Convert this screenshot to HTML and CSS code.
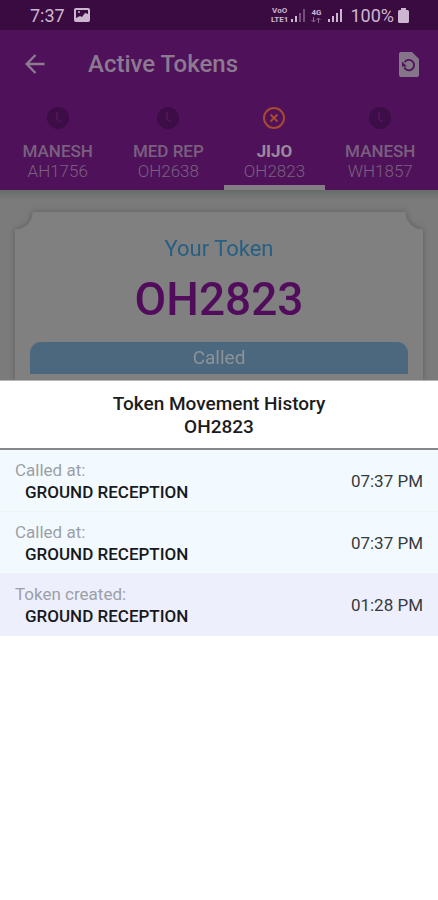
FILE: index.html
```html
<!DOCTYPE html>
<html lang="en">
<head>
<meta charset="utf-8">
<meta name="viewport" content="width=device-width, initial-scale=1">
<title>Active Tokens</title>
<link rel="stylesheet" href="styles.css">
</head>
<body>
<main class="screen">
  <div class="status">
    <span class="clock">7:37</span>
    <svg class="photo" width="16" height="14" viewBox="0 0 16 14" aria-hidden="true"><rect width="16" height="14" rx="2" fill="#cdb7d0"/><path d="M2 2h12v4l-3-1-3 4-2-1-4 2z" fill="#3a0b40"/><circle cx="5" cy="4" r="1" fill="#cdb7d0"/></svg>
    <span class="carrier"><span>VoO</span><span>LTE1</span></span>
    <svg class="bars" width="14" height="13" viewBox="0 0 14 13" aria-hidden="true"><path d="M0 10h2v3H0zM4 7h2v6H4z" fill="#cdb7d0"/><path d="M8 4h2v9H8zM12 0h2v13h-2z" fill="#71507a"/></svg>
    <span class="network"><span>4G</span><svg width="10" height="6" viewBox="0 0 10 6" fill="none" stroke="#8c6c92" aria-hidden="true"><path d="M2.500 0v5M.5 3l2 2 2-2M7.500 6V1M5.500 3l2-2 2 2"/></svg></span>
    <svg class="bars" width="14" height="13" viewBox="0 0 14 13" fill="#cdb7d0" aria-hidden="true"><path d="M0 10h2v3H0zM4 7h2v6H4zM8 4h2v9H8zM12 0h2v13h-2z"/></svg>
    <span class="percent">100%</span>
    <svg class="battery" width="11" height="15" viewBox="0 0 11 15" fill="#cdb7d0" aria-hidden="true"><path d="M3 0h5v2h1.500Q11 2 11 3.500v10Q11 15 9.500 15h-8Q0 15 0 13.500v-10Q0 2 1.500 2H3z"/></svg>
  </div>
  <header class="bar">
    <button class="icon-button" type="button" aria-label="Back"><svg width="20" height="20" viewBox="0 0 20 20" fill="none" stroke="#8c7a90" stroke-width="2.400" aria-hidden="true"><path d="M19.500 10H2M10.500 1L1.700 10l8.800 9"/></svg></button>
    <h1>Active Tokens</h1>
    <button class="icon-button" type="button" aria-label="Token history"><svg width="20" height="25" viewBox="0 0 20 25" aria-hidden="true"><path d="M2 0h11l7 7v16q0 2-2 2H2q-2 0-2-2V2Q0 0 2 0z" fill="#857589"/><path d="M5.600 10.200A5.200 5.200 0 1 1 5.300 15.500" fill="none" stroke="#4f125a" stroke-width="1.800"/><path d="M3 9.500v5h5z" fill="#4f125a"/></svg></button>
  </header>
  <nav class="tabs" aria-label="Tokens">
    <a class="tab" href="#t1"><svg width="24" height="24" viewBox="0 0 24 24" aria-hidden="true"><circle cx="12" cy="12" r="11" fill="#3d0d47"/><path d="M11 6v7l4 3" fill="none" stroke="#541660" stroke-width="1.500"/></svg><strong>MANESH</strong><span>AH1756</span></a>
    <a class="tab" href="#t2"><svg width="24" height="24" viewBox="0 0 24 24" aria-hidden="true"><circle cx="12" cy="12" r="11" fill="#3d0d47"/><path d="M11 6v7l4 3" fill="none" stroke="#541660" stroke-width="1.500"/></svg><strong>MED REP</strong><span>OH2638</span></a>
    <a class="tab active" href="#t3" aria-current="page"><svg width="24" height="24" viewBox="0 0 24 24" fill="none" stroke="#a64a30" stroke-width="2" aria-hidden="true"><circle cx="12" cy="12" r="10"/><path d="M8.500 8.500l7 7M15.500 8.500l-7 7"/></svg><strong>JIJO</strong><span>OH2823</span></a>
    <a class="tab" href="#t4"><svg width="24" height="24" viewBox="0 0 24 24" aria-hidden="true"><circle cx="12" cy="12" r="11" fill="#3d0d47"/><path d="M11 6v7l4 3" fill="none" stroke="#541660" stroke-width="1.500"/></svg><strong>MANESH</strong><span>WH1857</span></a>
  </nav>
  <section class="content">
    <div class="ticket-shadow">
      <div class="ticket">
        <h2>Your Token</h2>
        <p class="token">OH2823</p>
        <p class="state">Called</p>
      </div>
    </div>
  </section>
  <section class="sheet" aria-labelledby="sheet-title">
    <h2 class="sheet-title" id="sheet-title">Token Movement History<br>OH2823</h2>
    <ul class="history">
      <li><div><span class="event">Called at:</span><span class="place">GROUND RECEPTION</span></div><time>07:37 PM</time></li>
      <li><div><span class="event">Called at:</span><span class="place">GROUND RECEPTION</span></div><time>07:37 PM</time></li>
      <li class="created"><div><span class="event">Token created:</span><span class="place">GROUND RECEPTION</span></div><time>01:28 PM</time></li>
    </ul>
  </section>
</main>
</body>
</html>
```
FILE: styles.css
```css
* {
  box-sizing: border-box;
}

body {
  margin: 0;
  background: #fff;
  font-family: Roboto, "Liberation Sans", sans-serif;
}

h1, h2, p, ul {
  margin: 0;
  padding: 0;
}

.screen {
  display: flex;
  flex-direction: column;
  min-height: 100vh;
}

.status {
  display: flex;
  align-items: center;
  height: 30px;
  padding: 0 29px 0 30px;
  background: #3a0b40;
  color: #cdb7d0;
  font-size: 18px;
}

.photo {
  margin-left: 9px;
}

.carrier, .network {
  display: flex;
  flex-direction: column;
  align-items: center;
  font-size: 8px;
  font-weight: 700;
  line-height: 9px;
}

.carrier {
  margin-left: auto;
}

.bars {
  margin-left: 3px;
}

.network {
  margin: 0 4px 0 6px;
}

.percent {
  margin: 0 4px 0 8px;
}

.bar {
  display: flex;
  align-items: center;
  height: 68px;
  padding: 0 19px 0 25px;
  background: #4f125a;
  color: #8c7a90;
}

.bar h1 {
  flex: 1;
  margin-left: 43px;
  font-size: 24px;
  font-weight: 500;
}

.icon-button {
  display: flex;
  padding: 0;
  border: 0;
  background: none;
}

.tabs {
  display: flex;
  justify-content: center;
  background: #4f125a;
}

.tab {
  display: flex;
  flex-direction: column;
  align-items: center;
  padding: 8px 20px 4px;
  border-bottom: 5px solid transparent;
  color: #79607f;
  font-size: 17px;
  line-height: 20px;
  text-decoration: none;
  white-space: nowrap;
}

.tab strong {
  margin-top: 11px;
  font-weight: 500;
}

.tab span {
  font-weight: 300;
}

.tab.active {
  border-bottom-color: #857d86;
}

.tab.active strong {
  color: #9a8a9c;
  font-weight: 700;
}

.content {
  padding: 22px 15px 0;
  background: linear-gradient(#666b68, #7a7b7a 10px, #7b7b7b 22px);
}

.ticket-shadow {
  filter: drop-shadow(0 0 3px #5c5c5c);
}

.ticket {
  padding: 23px 15px 6px;
  background: #808080;
  text-align: center;
  -webkit-mask: radial-gradient(circle at 0 0, transparent 17px, #000 18px) left / 51% 100% no-repeat, radial-gradient(circle at 100% 0, transparent 17px, #000 18px) right / 51% 100% no-repeat;
  mask: radial-gradient(circle at 0 0, transparent 17px, #000 18px) left / 51% 100% no-repeat, radial-gradient(circle at 100% 0, transparent 17px, #000 18px) right / 51% 100% no-repeat;
}

.ticket h2 {
  color: #275f83;
  font-size: 22px;
  font-weight: 400;
  line-height: 28px;
}

.token {
  margin: 7px 0 14px;
  color: #510d5c;
  font-size: 46px;
  font-weight: 500;
  line-height: 58px;
}

.state {
  border-radius: 11px 11px 0 0;
  background: #4b687f;
  color: #8c9398;
  font-size: 19px;
  line-height: 32px;
}

.sheet {
  position: relative;
  flex: 1;
  border-top: 1px solid #b5b5b5;
  background: #fff;
}

.sheet-title {
  padding: 11px 16px 10px;
  border-bottom: 2px solid #858788;
  color: #1c1c1c;
  font-size: 19px;
  font-weight: 500;
  line-height: 23px;
  text-align: center;
}

.history {
  list-style: none;
}

.history li {
  display: flex;
  align-items: center;
  justify-content: space-between;
  padding: 9px 15px 8px;
  border-bottom: 1px solid #edf4f8;
  background: #f3faff;
  color: #363a3e;
  font-size: 17px;
}

.history .created {
  border-bottom-color: #edeffd;
  background: #edeffd;
}

.event, .place {
  display: block;
  line-height: 22px;
}

.event {
  color: #9c9fa5;
}

.place {
  padding-left: 10px;
  color: #17191c;
  font-weight: 500;
}
```
